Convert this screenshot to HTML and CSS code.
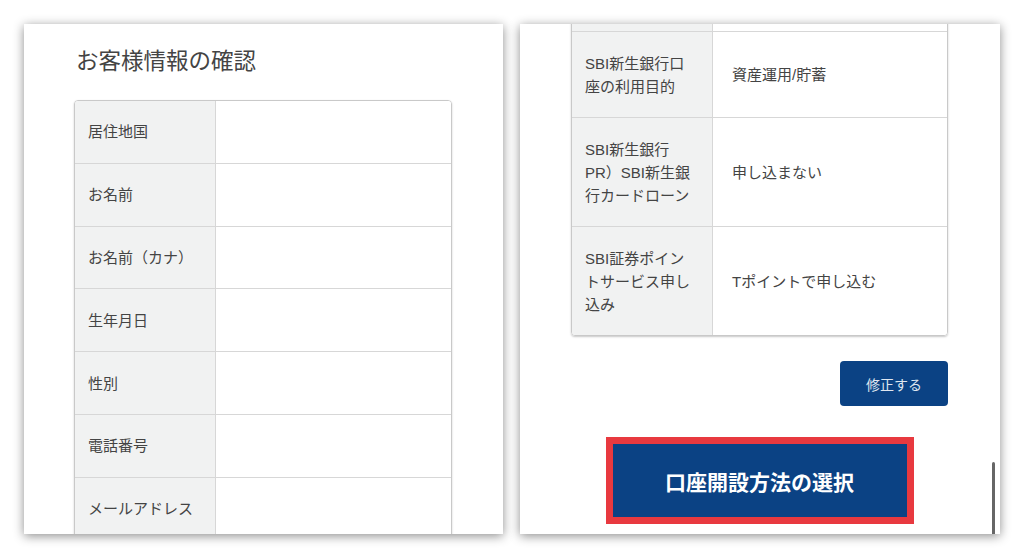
FILE: index.html
```html
<!DOCTYPE html>
<html lang="ja">
<head>
<meta charset="utf-8">
<link rel="stylesheet" href="styles.css">
</head>
<body>
<section class="panel panel-left">
  <h1 class="title">お客様情報の確認</h1>
  <div class="tbl">
    <div class="lab">居住地国</div><div class="val"></div>
    <div class="lab">お名前</div><div class="val"></div>
    <div class="lab">お名前（カナ）</div><div class="val"></div>
    <div class="lab">生年月日</div><div class="val"></div>
    <div class="lab">性別</div><div class="val"></div>
    <div class="lab">電話番号</div><div class="val"></div>
    <div class="lab">メールアドレス</div><div class="val"></div>
  </div>
</section>
<section class="panel panel-right">
  <div class="tbl tbl-right">
    <div class="lab cut"></div><div class="val cut"></div>
    <div class="lab">SBI新生銀行口<br>座の利用目的</div><div class="val">資産運用/貯蓄</div>
    <div class="lab">SBI新生銀行<br>PR）SBI新生銀<br>行カードローン</div><div class="val">申し込まない</div>
    <div class="lab">SBI証券ポイン<br>トサービス申し<br>込み</div><div class="val">Tポイントで申し込む</div>
  </div>
  <div class="edit-row"><button class="btn-edit">修正する</button></div>
  <div class="main-row">
    <div class="highlight"><button class="btn-main">口座開設方法の選択</button></div>
  </div>
  <div class="scrollbar"></div>
</section>
</body>
</html>
```
FILE: styles.css
```css
* { box-sizing: border-box; }
html, body { margin: 0; padding: 0; }
body {
  width: 1024px;
  height: 558px;
  background: #fff;
  display: flex;
  align-items: flex-start;
  gap: 17px;
  padding: 24px;
  font-family: "Liberation Sans", "Noto Sans CJK JP", sans-serif;
  color: #3c3c3c;
  overflow: hidden;
}
.panel {
  position: relative;
  height: 510px;
  background: #fff;
  overflow: hidden;
  box-shadow: 0 2px 10px rgba(0, 0, 0, 0.45);
}
.panel-left {
  width: 479px;
  padding: 0 51px 0 50px;
}
.panel-right {
  width: 480px;
  padding: 0 52px 0 51px;
}
.title {
  margin: 0 0 26px;
  padding: 20px 0 0 2px;
  font-family: "Noto Sans CJK JP", sans-serif;
  font-size: 22.5px;
  line-height: 30px;
  font-weight: 400;
  color: #444;
}
.tbl {
  display: grid;
  grid-template-columns: 141px 1fr;
  border: 1px solid #c9c9c9;
  border-radius: 4px;
  box-shadow: 0 1px 2px rgba(0, 0, 0, 0.22);
  overflow: hidden;
}
.lab, .val {
  border-bottom: 1px solid #d7d7d7;
  font-size: 15px;
  line-height: 23px;
  display: flex;
  align-items: center;
}
.lab {
  background: #f1f2f2;
  border-right: 1px solid #d7d7d7;
  padding: 0 10px 0 13px;
  color: #444;
}
.val {
  padding: 0 10px 0 19px;
  color: #444;
  background: #fff;
}
.panel-left .lab, .panel-left .val { height: 62.8px; }
.tbl-right { margin-top: -20px; }
.tbl-right .lab, .tbl-right .val { padding-top: 19.5px; padding-bottom: 19.5px; }
.tbl-right .lab.cut, .tbl-right .val.cut { height: 27px; padding: 0; }
.tbl-right > :nth-last-child(-n+2) { border-bottom: none; }
.edit-row {
  display: flex;
  justify-content: flex-end;
  margin-top: 25px;
}
.btn-edit {
  width: 108px;
  height: 45px;
  border: none;
  border-radius: 4px;
  background: #0b4284;
  color: #dfe6f0;
  font-family: "Noto Sans CJK JP", sans-serif;
  font-size: 14px;
  padding: 0;
}
.main-row {
  display: flex;
  justify-content: center;
  margin-top: 31px;
}
.highlight {
  border: 7px solid #e8393f;
}
.btn-main {
  display: block;
  width: 294px;
  height: 73px;
  border: none;
  background: #0b4284;
  color: #fff;
  font-family: "Noto Sans CJK JP", sans-serif;
  font-size: 21px;
  font-weight: 700;
  padding: 0;
}
.scrollbar {
  position: absolute;
  right: 5px;
  bottom: 0;
  width: 3px;
  height: 72px;
  border-radius: 2px 2px 0 0;
  background: #666;
}
```
